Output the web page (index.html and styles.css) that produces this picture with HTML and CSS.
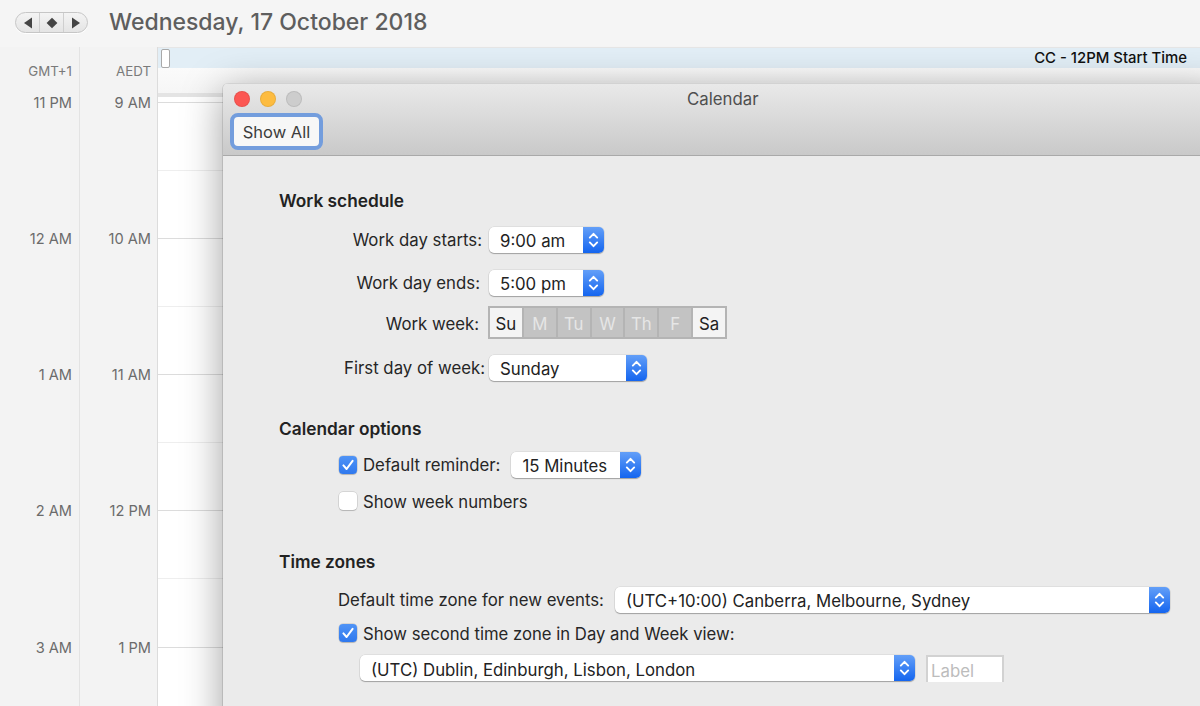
FILE: index.html
```html
<!DOCTYPE html>
<html lang="en">
<head>
<meta charset="utf-8">
<title>Calendar</title>
<link rel="stylesheet" href="styles.css">
</head>
<body>
<svg class="defs" aria-hidden="true"><symbol id="updown" viewBox="0 0 21 26"><path d="M6.8 10.6 10.5 6.8 14.2 10.6M6.8 15.4 10.5 19.2 14.2 15.4" fill="none" stroke="#fff" stroke-width="1.9" stroke-linecap="round" stroke-linejoin="round"/></symbol></svg>
<div class="app">
  <header class="toolbar">
    <div class="nav">
      <span class="nav-btn"><svg width="10" height="12" viewBox="0 0 10 12"><path d="M9 0.5V11.5L1 6Z" fill="#444"/></svg></span>
      <span class="nav-btn"><svg width="12" height="12" viewBox="0 0 12 12"><path d="M6 0.8 11.4 6 6 11.2 0.6 6Z" fill="#444"/></svg></span>
      <span class="nav-btn"><svg width="10" height="12" viewBox="0 0 10 12"><path d="M1 0.5V11.5L9 6Z" fill="#444"/></svg></span>
    </div>
    <h1 class="date">Wednesday, 17 October 2018</h1>
  </header>
  <div class="cal">
    <div class="gutter gutter-a">
      <div class="tz">GMT+1</div>
      <div class="hr">11 PM</div><div class="hr">12 AM</div><div class="hr">1 AM</div><div class="hr">2 AM</div><div class="hr">3 AM</div>
    </div>
    <div class="gutter gutter-b">
      <div class="tz">AEDT</div>
      <div class="hr">9 AM</div><div class="hr">10 AM</div><div class="hr">11 AM</div><div class="hr">12 PM</div><div class="hr">1 PM</div>
    </div>
    <div class="day">
      <div class="allday"><span class="allday-box"></span><span class="event">CC - 12PM Start Time</span></div>
      <div class="allday-rest"></div>
      <div class="band"></div>
      <div class="slot"></div><div class="slot half"></div><div class="slot"></div><div class="slot half"></div><div class="slot"></div><div class="slot half"></div><div class="slot"></div><div class="slot half"></div><div class="slot"></div>
    </div>
  </div>

  <section class="prefs">
    <div class="titlebar">
      <div class="title-row">
        <span class="light red"></span><span class="light yellow"></span><span class="light grey"></span>
        <span class="win-title">Calendar</span>
      </div>
      <button class="show-all">Show All</button>
    </div>
    <div class="prefs-body">
      <h2 class="heading">Work schedule</h2>
      <div class="row mt16"><span class="label pr7">Work day starts:</span><div class="select w115"><span class="val">9:00 am</span><span class="step"><svg width="21" height="26"><use href="#updown"/></svg></span></div></div>
      <div class="row mt17"><span class="label pr9">Work day ends:</span><div class="select w115"><span class="val">5:00 pm</span><span class="step"><svg width="21" height="26"><use href="#updown"/></svg></span></div></div>
      <div class="row mt10 week-row"><span class="label week-label pr10">Work week:</span>
        <div class="week"><span class="d on">Su</span><span class="d">M</span><span class="d">Tu</span><span class="d">W</span><span class="d">Th</span><span class="d">F</span><span class="d on">Sa</span></div>
      </div>
      <div class="row mt16"><span class="label pr4">First day of week:</span><div class="select w158"><span class="val">Sunday</span><span class="step"><svg width="21" height="26"><use href="#updown"/></svg></span></div></div>

      <h2 class="heading mt38">Calendar options</h2>
      <div class="row mt13 ind60"><span class="check on"><svg width="18" height="18" viewBox="0 0 18 18"><path d="M4.4 9.4 7.6 13 13.6 4.8" fill="none" stroke="#fff" stroke-width="2" stroke-linecap="round" stroke-linejoin="round"/></svg></span><span class="check-text">Default reminder:</span><div class="select w130 ml11"><span class="val">15 Minutes</span><span class="step"><svg width="21" height="26"><use href="#updown"/></svg></span></div></div>
      <div class="row-s mt14 ind60"><span class="check"></span><span class="check-text">Show week numbers</span></div>

      <h2 class="heading mt42">Time zones</h2>
      <div class="row mt15 ind59"><span class="plain-label">Default time zone for new events:</span><div class="select w555 ml11"><span class="val">(UTC+10:00) Canberra, Melbourne, Sydney</span><span class="step"><svg width="21" height="26"><use href="#updown"/></svg></span></div></div>
      <div class="row-s mt11 ind60"><span class="check on"><svg width="18" height="18" viewBox="0 0 18 18"><path d="M4.4 9.4 7.6 13 13.6 4.8" fill="none" stroke="#fff" stroke-width="2" stroke-linecap="round" stroke-linejoin="round"/></svg></span><span class="check-text">Show second time zone in Day and Week view:</span></div>
      <div class="row mt13 ind81"><div class="select w555"><span class="val val-low">(UTC) Dublin, Edinburgh, Lisbon, London</span><span class="step"><svg width="21" height="26"><use href="#updown"/></svg></span></div><div class="tz-label">Label</div></div>
    </div>
  </section>
</div>
</body>
</html>
```
FILE: styles.css
```css
* { box-sizing: border-box; }
html, body { margin: 0; height: 100%; }
body { font-family: Inter, "Noto Sans", "Liberation Sans", sans-serif; overflow: hidden; background: #f4f4f4; }
.defs { display: none; }
.app { position: relative; width: 1200px; height: 706px; overflow: hidden; background: #f4f4f4; }

.toolbar { height: 47px; display: flex; align-items: flex-start; background: #f5f5f5; padding: 12px 0 0 15px; }
.nav { width: 73px; height: 21px; display: flex; border: 1px solid #c6c6c6; border-radius: 11px; background: linear-gradient(#f4f4f4, #e4e4e4); box-shadow: 0 1px 0 #fff; }
.nav-btn { flex: 1; display: flex; align-items: center; justify-content: center; border-left: 1px solid #cfcfcf; }
.nav-btn:first-child { border-left: 0; }
.date { margin: -4px 0 0 21px; font-size: 23px; line-height: 28px; font-weight: 500; color: #5e5e5e; }

.cal { display: flex; height: 659px; }
.gutter { flex: none; text-align: right; border-right: 1px solid #e3e3e3; color: #6b6b6b; background: #f3f3f3; }
.gutter-a { width: 80px; padding-right: 7px; }
.gutter-b { width: 78px; padding-right: 6px; border-right-color: #dcdcdc; }
.tz { height: 47.5px; padding-top: 16px; font-size: 13.3px; line-height: 16px; color: #7a7a7a; }
.hr { height: 136.25px; font-size: 14.6px; line-height: 16px; }

.day { flex: 1; background: #fff; min-width: 0; border-top: 1px solid #e6e6e6; }
.allday { height: 20px; background: #e2eef6; display: flex; align-items: center; justify-content: space-between; padding: 0 13px 0 3px; }
.allday-box { width: 9px; height: 19px; background: #fff; border: 1px solid #a9a9a9; border-radius: 2px; }
.event { font-size: 14.9px; font-weight: 500; color: #111; }
.allday-rest { height: 25px; background: linear-gradient(#fbfbfb, #f6f6f6); }
.band { height: 4px; background: #e4e4e4; margin-bottom: 4.5px; }
.slot { height: 68.125px; border-top: 1px solid #dcdcdc; }
.slot.half { border-top-color: #eeeeee; }

.prefs { position: absolute; left: 223px; top: 83px; width: 1000px; height: 660px; background: #ebebeb; border-radius: 6px 0 0 0; box-shadow: 0 8px 40px rgba(0,0,0,.38), -1px 0 0 rgba(0,0,0,.1); color: #262626; overflow: hidden; }
.titlebar { height: 73px; background: linear-gradient(#e9e9e9, #c9c9c9); border-top: 1px solid #d2d2d2; border-bottom: 1px solid #a9a9a9; padding: 6px 0 0 8px; }
.title-row { display: flex; align-items: center; height: 17px; position: relative; padding-left: 2.5px; }
.light { width: 16px; height: 16px; border-radius: 50%; margin-right: 10px; flex: none; border: 1px solid rgba(0,0,0,.08); }
.red { background: #fc5753; }
.yellow { background: #fdbc40; }
.grey { background: #cdcdcd; }
.win-title { position: absolute; left: 456px; font-size: 16.8px; color: #4f4f4f; }
.show-all { display: block; margin: 6px 0 0 -1px; width: 93px; height: 37px; padding: 0; border: 4px solid #739ddd; border-radius: 8px; background: #f7f7f7; font: 16.5px Inter, "Noto Sans", sans-serif; color: #3c3c3c; }

.prefs-body { padding: 35px 0 0 56px; font-size: 16.8px; }
.heading { margin: 0; height: 20px; font-size: 17.3px; line-height: 20px; font-weight: 600; color: #222; }
.row { display: flex; align-items: center; height: 26px; }
.row-s { display: flex; align-items: center; height: 18px; }
.week-row { height: 33px; }
.label { width: 210px; flex: none; text-align: right; white-space: nowrap; line-height: 20px; }
.week-label { margin-top: 3px; }
.plain-label, .check-text { white-space: nowrap; line-height: 20px; }
.row-s .check-text { margin-top: 1px; font-size: 16.7px; }
.pr7 { padding-right: 7px; }
.pr9 { padding-right: 9px; }
.pr10 { padding-right: 10px; }
.pr4 { padding-right: 4px; }
.mt10 { margin-top: 10px; }
.mt11 { margin-top: 11px; }
.mt13 { margin-top: 13px; }
.mt14 { margin-top: 14px; }
.mt15 { margin-top: 15px; }
.mt16 { margin-top: 16px; }
.mt17 { margin-top: 17px; }
.mt38 { margin-top: 38px; }
.mt42 { margin-top: 42px; }
.ind59 { margin-left: 59px; }
.ind60 { margin-left: 60px; }
.ind81 { margin-left: 81px; }
.ml11 { margin-left: 11px; }

.select { height: 26px; flex: none; display: flex; border-radius: 5px; background: #fff; box-shadow: 0 1px 1px rgba(0,0,0,.28), 0 0 0 .5px rgba(0,0,0,.1); overflow: hidden; }
.w115 { width: 115px; }
.w130 { width: 130px; }
.w158 { width: 158px; }
.w555 { width: 555px; }
.val { flex: 1; padding: 1px 0 0 11px; line-height: 26px; white-space: nowrap; color: #222; }
.val-low { padding-top: 2px; }
.step { width: 21px; flex: none; background: linear-gradient(#639ff8, #1465ef); }
.step svg { display: block; }

.week { display: flex; width: 239px; height: 33px; margin-left: -1px; border: 2px solid #b4b4b4; gap: 2px; background: #b4b4b4; }
.d { flex: 1; display: flex; align-items: center; justify-content: center; padding-top: 2px; background: #c3c3c3; color: #e6e6e6; }
.d.on { background: #f4f4f4; color: #222; }

.check { width: 18px; height: 18px; flex: none; border-radius: 4px; background: #fff; box-shadow: 0 0 0 .5px rgba(0,0,0,.18), 0 1px 1px rgba(0,0,0,.15); }
.check.on { background: linear-gradient(#4f93f6, #2f78ee); }
.check svg { display: block; }
.check-text { margin-left: 6px; }
.tz-label { width: 78px; height: 27px; margin-left: 11px; padding: 3px 0 0 3px; background: #fff; border: 2px solid #d2d2d2; border-bottom: 0; color: #bcbcbc; line-height: 22px; }
```
